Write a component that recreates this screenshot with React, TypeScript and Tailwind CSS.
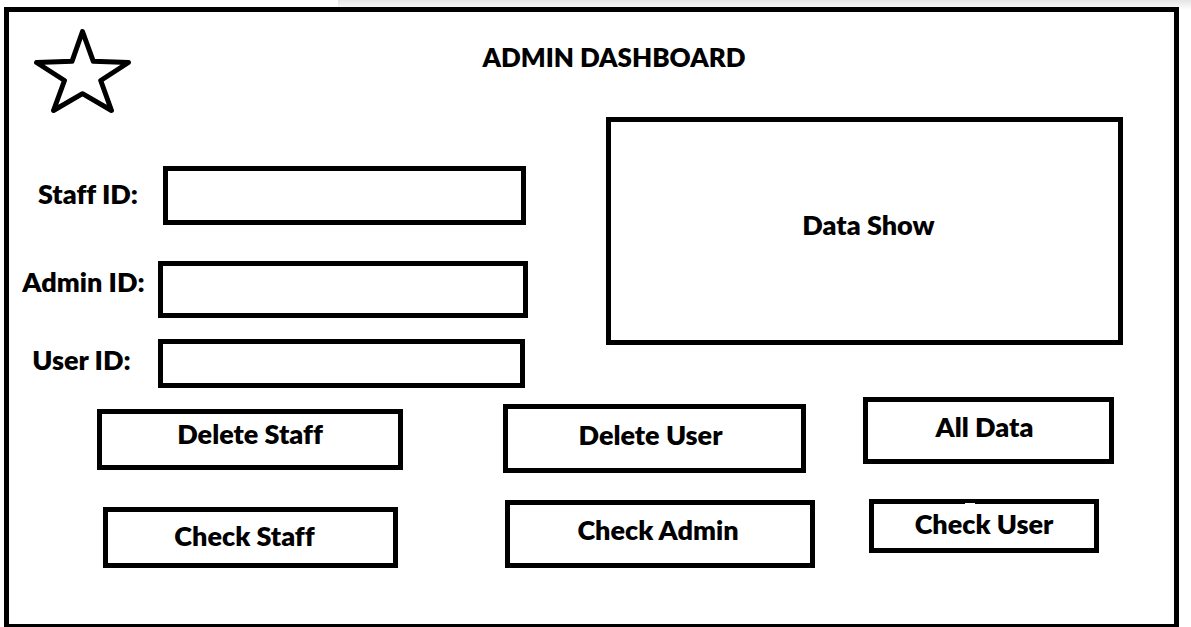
import React from "react";

const buttonClass =
  "relative flex items-center justify-center border-[5px] border-black bg-white font-extrabold";
const labelClass = "flex shrink-0 items-center justify-center font-extrabold";
const inputClass =
  "min-w-0 flex-1 border-[5px] border-black bg-white px-3 outline-none";

function Star() {
  return (
    <svg
      width="97"
      height="85"
      viewBox="0 0 97 85"
      fill="none"
      stroke="#000"
      strokeWidth="5"
      strokeLinejoin="round"
      aria-hidden="true"
    >
      <path d="M48.5 2.5 59.3 32.3 94.5 33.5 66.7 51.5 77.5 81.5 48.5 64.7 19.5 81.5 30.5 51.5 2.5 33.5 38 32.3Z" />
    </svg>
  );
}

export default function App() {
  return (
    <div className="relative flex min-h-screen flex-col bg-white pt-[7px] pr-3 pl-1 font-['Lato','Liberation_Sans',sans-serif] text-[27px] leading-8 text-black [font-variant-ligatures:none]">
      <div className="absolute top-0 right-0 left-[338px] h-[10px] bg-linear-to-b from-[#e5e5e5] to-white" />
      <main className="relative flex flex-1 flex-col border-[5px] border-b-[3px] border-black bg-white">
        <header className="grid h-[105px] grid-cols-[1fr_auto_1fr] pt-[17px] pl-[25px]">
          <Star />
          <h1 className="pt-3 pl-5 text-[26px] font-extrabold">ADMIN DASHBOARD</h1>
        </header>

        <div className="grid grid-cols-[575fr_590fr] items-start">
          <form className="flex min-w-0 flex-col pt-[49px] pr-14">
            <div className="flex h-[59px] pr-0.5">
              <label htmlFor="staff" className={`${labelClass} w-[154px] pb-1 pl-1`}>
                Staff ID:
              </label>
              <input id="staff" type="text" className={inputClass} />
            </div>
            <div className="mt-9 flex h-[57px]">
              <label htmlFor="admin" className={`${labelClass} w-[149px] pb-4`}>
                Admin ID:
              </label>
              <input id="admin" type="text" className={inputClass} />
            </div>
            <div className="mt-[21px] flex h-[49px] pr-[3px]">
              <label htmlFor="user" className={`${labelClass} w-[149px] pr-1 pb-2`}>
                User ID:
              </label>
              <input id="user" type="text" className={inputClass} />
            </div>
          </form>
          <div className="pr-[51px] pl-[22px]">
            <section className="flex h-[228px] items-center justify-center border-[5px] border-black pb-3 pl-2 font-extrabold">
              Data Show
            </section>
          </div>
        </div>

        <div className="grid grid-cols-[444fr_386fr_335fr] pt-[9px] pb-14">
          <div className="flex flex-col gap-[37px] pt-3 pr-[50px] pl-[88px]">
            <button type="button" className={`${buttonClass} h-[61px] pb-3`}>
              Delete Staff
            </button>
            <button type="button" className={`${buttonClass} mr-[5px] ml-1.5 h-[61px] pr-3 pb-1`}>
              Check Staff
            </button>
          </div>
          <div className="flex flex-col gap-[27px] pt-[7px] pr-6 pl-[50px]">
            <button type="button" className={`${buttonClass} mr-[9px] h-[69px] pr-2 pb-2`}>
              Delete User
            </button>
            <button type="button" className={`${buttonClass} ml-0.5 h-[68px] pr-1 pb-2`}>
              Check Admin
            </button>
          </div>
          <div className="flex flex-col gap-[35px] pr-[60px] pl-6">
            <button type="button" className={`${buttonClass} h-[67px] pr-2 pb-2`}>
              All Data
            </button>
            <button type="button" className={`${buttonClass} mr-[15px] ml-1.5 h-[54px] pb-1`}>
              <span className="absolute -top-px left-[91px] h-px w-[10px] bg-white" />
              Check User
            </button>
          </div>
        </div>
      </main>
    </div>
  );
}
